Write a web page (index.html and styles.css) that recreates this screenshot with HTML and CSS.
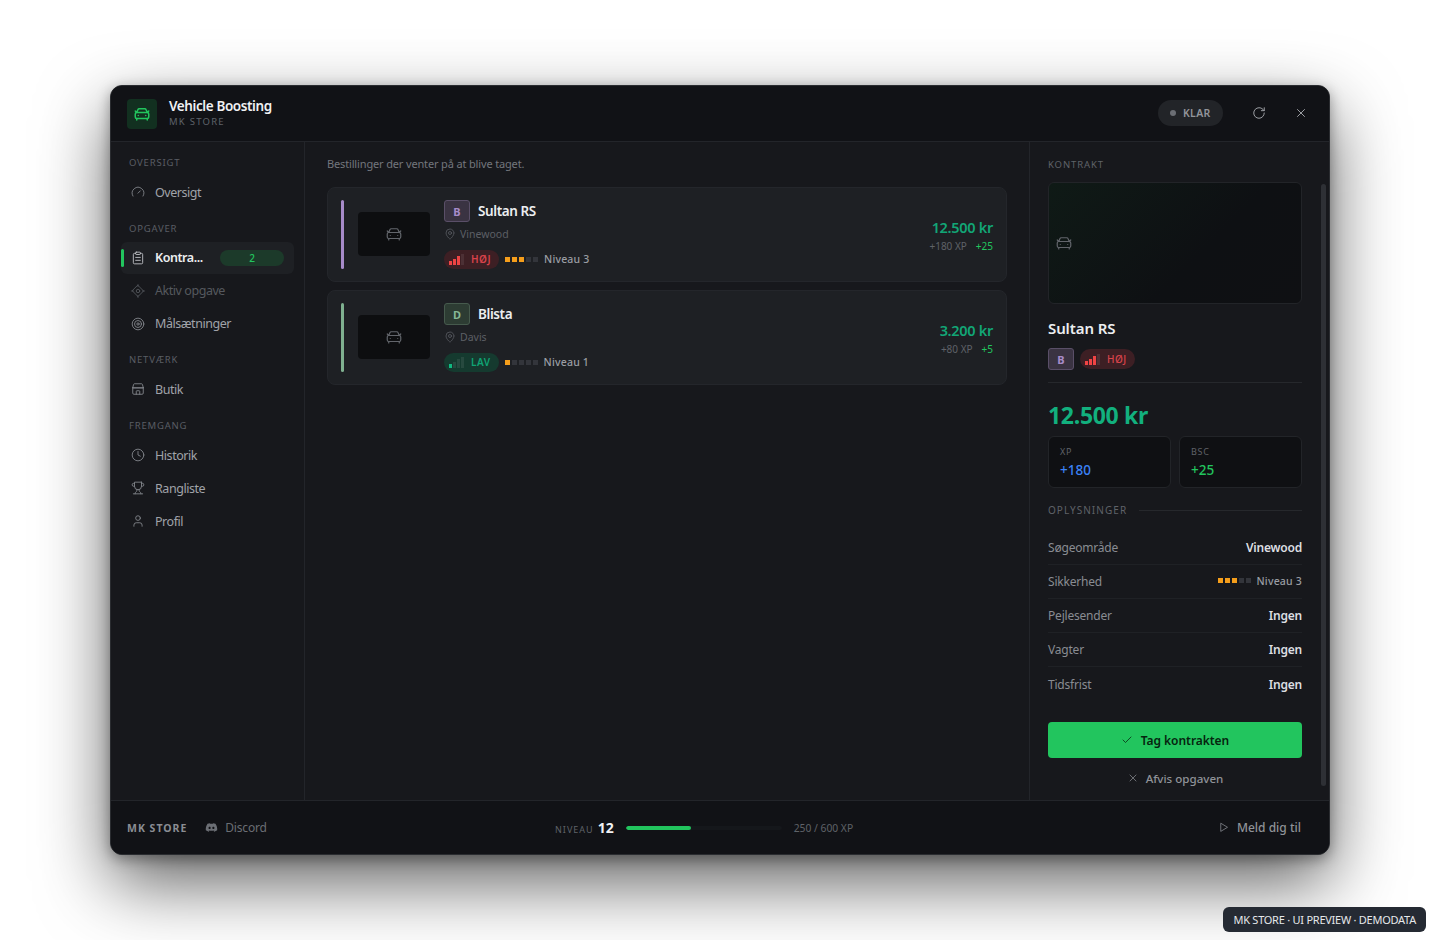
FILE: index.html
```html
<!DOCTYPE html>
<html lang="en">
<head>
  <meta charset="UTF-8" />
  <title>Vehicle Boosting</title>
  <link rel="stylesheet" href="styles.css">
</head>
<body>
  <svg class="sprite" xmlns="http://www.w3.org/2000/svg">
    <symbol id="i-car" viewBox="0 0 24 24"><path d="m21 8-2 2-1.5-3.7A2 2 0 0 0 15.65 5H8.4a2 2 0 0 0-1.9 1.26L5 10 3 8"/><path d="M7 14h.01M17 14h.01"/><rect x="3" y="10" width="18" height="8" rx="2"/><path d="M5 18v2M19 18v2"/></symbol>
    <symbol id="i-gauge" viewBox="0 0 24 24"><path d="m12 14 4-4"/><path d="M3.34 19a10 10 0 1 1 17.32 0"/></symbol>
    <symbol id="i-clip" viewBox="0 0 24 24"><rect x="8" y="2" width="8" height="4" rx="1"/><path d="M16 4h2a2 2 0 0 1 2 2v14a2 2 0 0 1-2 2H6a2 2 0 0 1-2-2V6a2 2 0 0 1 2-2h2"/><path d="M8 11h8M8 16h8"/></symbol>
    <symbol id="i-locate" viewBox="0 0 24 24"><path d="M12 2.500 21.500 12 12 21.500 2.500 12Z"/><circle cx="12" cy="12" r="3"/><path d="M12 1v3M12 20v3M1 12h3M20 12h3"/></symbol>
    <symbol id="i-target" viewBox="0 0 24 24"><circle cx="12" cy="12" r="10"/><circle cx="12" cy="12" r="6"/><circle cx="12" cy="12" r="2"/></symbol>
    <symbol id="i-store" viewBox="0 0 24 24"><path d="M3 9.500V19a2 2 0 0 0 2 2h14a2 2 0 0 0 2-2V9.500"/><path d="M3 9.500 4.500 4a1.500 1.500 0 0 1 1.400-1h12.200a1.500 1.500 0 0 1 1.400 1L21 9.500Z"/><path d="M3 10h18M9 21v-5a1 1 0 0 1 1-1h4a1 1 0 0 1 1 1v5"/></symbol>
    <symbol id="i-clock" viewBox="0 0 24 24"><circle cx="12" cy="12" r="10"/><path d="M12 6v6l4 2"/></symbol>
    <symbol id="i-trophy" viewBox="0 0 24 24"><path d="M6 9H4.500a2.500 2.500 0 0 1 0-5H6M18 9h1.500a2.500 2.500 0 0 0 0-5H18M4 22h16"/><path d="M10 14.660V17c0 .55-.47.98-.97 1.210C7.850 18.750 7 20.240 7 22M14 14.660V17c0 .55.47.98.97 1.210C16.150 18.750 17 20.240 17 22"/><path d="M18 2H6v7a6 6 0 0 0 12 0V2Z"/></symbol>
    <symbol id="i-user" viewBox="0 0 24 24"><path d="M19 21v-2a4 4 0 0 0-4-4H9a4 4 0 0 0-4 4v2"/><circle cx="12" cy="7" r="4"/></symbol>
    <symbol id="i-pin" viewBox="0 0 24 24"><path d="M20 10c0 5-5.500 10.200-7.400 11.800a1 1 0 0 1-1.200 0C9.500 20.200 4 15 4 10a8 8 0 0 1 16 0"/><circle cx="12" cy="10" r="3"/></symbol>
    <symbol id="i-refresh" viewBox="0 0 24 24"><path d="M21 12a9 9 0 1 1-9-9c2.520 0 4.930 1 6.740 2.740L21 8"/><path d="M21 3v5h-5"/></symbol>
    <symbol id="i-x" viewBox="0 0 24 24"><path d="M18 6 6 18M6 6l12 12"/></symbol>
    <symbol id="i-check" viewBox="0 0 24 24"><path d="M20 6 9 17l-5-5"/></symbol>
    <symbol id="i-play" viewBox="0 0 24 24"><path d="M6 3.500v17l14-8.500Z"/></symbol>
  </svg>

  <div class="window">
    <header class="topbar">
      <div class="brand-icon"><svg class="ic"><use href="#i-car"/></svg></div>
      <div class="brand-text">
        <div class="brand-title">Vehicle Boosting</div>
        <div class="brand-sub">MK STORE</div>
      </div>
      <div class="status"><span class="status-dot"></span>KLAR</div>
      <button class="top-btn"><svg class="ic"><use href="#i-refresh"/></svg></button>
      <button class="top-btn"><svg class="ic"><use href="#i-x"/></svg></button>
    </header>

    <div class="body">
      <nav class="sidebar">
        <div class="nav-label">OVERSIGT</div>
        <a class="nav-item"><svg class="ic"><use href="#i-gauge"/></svg>Oversigt</a>

        <div class="nav-label">OPGAVER</div>
        <a class="nav-item active"><svg class="ic"><use href="#i-clip"/></svg><span class="nav-name">Kontra...</span><span class="nav-count">2</span></a>
        <a class="nav-item disabled"><svg class="ic"><use href="#i-locate"/></svg>Aktiv opgave</a>
        <a class="nav-item"><svg class="ic"><use href="#i-target"/></svg>Målsætninger</a>

        <div class="nav-label">NETVÆRK</div>
        <a class="nav-item"><svg class="ic"><use href="#i-store"/></svg>Butik</a>

        <div class="nav-label">FREMGANG</div>
        <a class="nav-item"><svg class="ic"><use href="#i-clock"/></svg>Historik</a>
        <a class="nav-item"><svg class="ic"><use href="#i-trophy"/></svg>Rangliste</a>
        <a class="nav-item"><svg class="ic"><use href="#i-user"/></svg>Profil</a>
      </nav>

      <main class="main">
        <p class="intro">Bestillinger der venter på at blive taget.</p>

        <div class="card">
          <div class="accent accent-b"></div>
          <div class="thumb"><svg class="ic"><use href="#i-car"/></svg></div>
          <div class="card-info">
            <div class="card-head"><span class="grade grade-b">B</span><span class="card-name">Sultan RS</span></div>
            <div class="card-loc"><svg class="ic"><use href="#i-pin"/></svg>Vinewood</div>
            <div class="card-tags">
              <span class="risk risk-high"><span class="bars"><i class="on"></i><i class="on"></i><i class="on"></i><i></i></span>HØJ</span>
              <span class="sec"><i class="on"></i><i class="on"></i><i class="on"></i><i></i><i></i></span>
              <span class="sec-text">Niveau 3</span>
            </div>
          </div>
          <div class="card-pay">
            <div class="card-price">12.500 kr</div>
            <div class="card-rewards"><span class="xp">+180 XP</span><span class="bsc">+25</span></div>
          </div>
        </div>

        <div class="card">
          <div class="accent accent-d"></div>
          <div class="thumb"><svg class="ic"><use href="#i-car"/></svg></div>
          <div class="card-info">
            <div class="card-head"><span class="grade grade-d">D</span><span class="card-name">Blista</span></div>
            <div class="card-loc"><svg class="ic"><use href="#i-pin"/></svg>Davis</div>
            <div class="card-tags">
              <span class="risk risk-low"><span class="bars"><i class="on"></i><i></i><i></i><i></i></span>LAV</span>
              <span class="sec"><i class="on"></i><i></i><i></i><i></i><i></i></span>
              <span class="sec-text">Niveau 1</span>
            </div>
          </div>
          <div class="card-pay">
            <div class="card-price">3.200 kr</div>
            <div class="card-rewards"><span class="xp">+80 XP</span><span class="bsc">+5</span></div>
          </div>
        </div>
      </main>

      <aside class="detail">
        <div class="scrollbar"></div>
        <div class="detail-label">KONTRAKT</div>
        <div class="hero"><svg class="ic"><use href="#i-car"/></svg></div>
        <div class="detail-name">Sultan RS</div>
        <div class="detail-badges">
          <span class="grade grade-b">B</span>
          <span class="risk risk-high risk-sm"><span class="bars"><i class="on"></i><i class="on"></i><i class="on"></i><i></i></span>HØJ</span>
        </div>
        <div class="detail-price">12.500 kr</div>
        <div class="stats">
          <div class="stat"><div class="stat-label">XP</div><div class="stat-value blue">+180</div></div>
          <div class="stat"><div class="stat-label">BSC</div><div class="stat-value green">+25</div></div>
        </div>
        <div class="info-head"><span>OPLYSNINGER</span></div>
        <div class="info-row"><span>Søgeområde</span><b>Vinewood</b></div>
        <div class="info-row"><span>Sikkerhed</span><span class="info-sec"><span class="sec"><i class="on"></i><i class="on"></i><i class="on"></i><i></i><i></i></span><span class="sec-text">Niveau 3</span></span></div>
        <div class="info-row"><span>Pejlesender</span><b>Ingen</b></div>
        <div class="info-row"><span>Vagter</span><b>Ingen</b></div>
        <div class="info-row"><span>Tidsfrist</span><b>Ingen</b></div>
        <button class="btn-take"><svg class="ic"><use href="#i-check"/></svg>Tag kontrakten</button>
        <button class="btn-reject"><svg class="ic"><use href="#i-x"/></svg>Afvis opgaven</button>
      </aside>
    </div>

    <footer class="footer">
      <div class="foot-left">
        <span class="foot-brand">MK STORE</span>
        <span class="foot-discord">
          <svg class="discord" viewBox="0 0 24 24"><path d="M19.300 5.300A18 18 0 0 0 15 4l-.6 1.200a17 17 0 0 0-4.800 0L9 4a18 18 0 0 0-4.400 1.300C1.900 9.400 1.100 13.400 1.500 17.300A18 18 0 0 0 7 20l1.100-1.800a11 11 0 0 1-1.800-.9l.4-.3a13 13 0 0 0 10.600 0l.4.3a11 11 0 0 1-1.800.9L17 20a18 18 0 0 0 5.500-2.700c.5-4.500-.8-8.500-3.200-12ZM8.500 14.900c-1.100 0-2-1-2-2.200s.9-2.200 2-2.200 2 1 2 2.200-.9 2.200-2 2.200Zm7 0c-1.100 0-2-1-2-2.200s.9-2.200 2-2.200 2 1 2 2.200-.9 2.200-2 2.200Z"/></svg>
          Discord
        </span>
      </div>
      <div class="foot-mid">
        <span class="lvl-label">NIVEAU</span>
        <span class="lvl-num">12</span>
        <div class="xp-track"><div class="xp-fill" style="width: 41.7%"></div></div>
        <span class="xp-text">250 / 600 XP</span>
      </div>
      <div class="foot-right"><svg class="ic"><use href="#i-play"/></svg>Meld dig til</div>
    </footer>
  </div>

  <div class="watermark">MK STORE · UI PREVIEW · DEMODATA</div>
</body>
</html>
```

FILE: styles.css
```css
* {
  box-sizing: border-box;
}
body {
  margin: 0;
  height: 940px;
  overflow: hidden;
  background: #fff;
  font-family: "Noto Sans", Arial, sans-serif;
  display: flex;
  align-items: center;
  justify-content: center;
}
.sprite {
  display: none;
}
.ic {
  fill: none;
  stroke: currentColor;
  stroke-width: 2;
  stroke-linecap: round;
  stroke-linejoin: round;
  flex: none;
}
button {
  font-family: inherit;
  border: 0;
  background: none;
  cursor: pointer;
}

.window {
  width: 1220px;
  height: 770px;
  display: flex;
  flex-direction: column;
  background: #17181c;
  border: 1px solid #2a2c30;
  border-radius: 12px;
  overflow: hidden;
  box-shadow: 0 28px 70px rgba(0, 0, 0, 0.62), 0 4px 14px rgba(0, 0, 0, 0.35);
}

/* top bar */
.topbar {
  height: 56px;
  flex: none;
  display: flex;
  align-items: center;
  padding: 0 16px;
  background: #111216;
  border-bottom: 1px solid #23252a;
}
.brand-icon {
  width: 30px;
  height: 30px;
  border-radius: 4px;
  background: #123020;
  color: #22c55e;
  display: flex;
  align-items: center;
  justify-content: center;
}
.brand-icon .ic {
  width: 18px;
  height: 18px;
}
.brand-text {
  margin-left: 12px;
  flex: 1;
}
.brand-title {
  font-size: 13.5px;
  line-height: 16px;
  font-weight: 600;
  color: #f0f1f3;
  letter-spacing: -0.4px;
}
.brand-sub {
  font-size: 9.5px;
  line-height: 14px;
  margin-top: 1px;
  color: #5e6269;
  letter-spacing: 1.25px;
}
.status {
  height: 26px;
  width: 65px;
  border-radius: 13px;
  background: #222428;
  color: #92959b;
  font-size: 10.5px;
  font-weight: 600;
  letter-spacing: 0.3px;
  display: flex;
  align-items: center;
  padding-left: 12px;
  gap: 7px;
  margin-bottom: 1px;
}
.status-dot {
  width: 6px;
  height: 6px;
  border-radius: 50%;
  background: #6b6e74;
}
.top-btn {
  width: 16px;
  height: 16px;
  padding: 0;
  color: #a6a8ad;
  margin-left: 26px;
  margin-bottom: 1px;
  display: flex;
}
.status + .top-btn {
  margin-left: 28px;
}
.top-btn .ic {
  width: 14px;
  height: 14px;
  margin: 1px;
  stroke-width: 1.6;
}
.top-btn:last-child {
  margin-right: 4px;
}

.body {
  flex: 1;
  display: flex;
  min-height: 0;
}

/* sidebar */
.sidebar {
  width: 194px;
  flex: none;
  padding: 10px 10px 0;
  border-right: 1px solid #23252a;
}
.nav-label {
  font-size: 9.5px;
  line-height: 22px;
  letter-spacing: 0.8px;
  color: #5a5d64;
  padding-left: 8px;
  margin-top: 9.7px;
  margin-bottom: 2px;
}
.nav-label:first-child {
  margin-top: 0;
}
.nav-item {
  height: 32px;
  margin-bottom: 1px;
  display: flex;
  align-items: center;
  gap: 10px;
  padding: 0 10px 0 10px;
  border-radius: 6px;
  font-size: 12.5px;
  letter-spacing: -0.45px;
  color: #a0a3a9;
  position: relative;
}
.nav-item .ic {
  width: 14px;
  height: 14px;
  stroke-width: 1.5;
  color: #85888e;
}
.nav-item.active {
  background: #1e2024;
  color: #eceef0;
  font-weight: 600;
}
.nav-item.active::before {
  content: "";
  position: absolute;
  left: 0;
  top: 7px;
  width: 3px;
  height: 18px;
  border-radius: 2px;
  background: #22c55e;
}
.nav-item.active .ic {
  color: #c5c7cb;
}
.nav-item.disabled,
.nav-item.disabled .ic {
  color: #55585e;
}
.nav-name {
  flex: 1;
}
.nav-count {
  width: 64px;
  height: 16px;
  border-radius: 8px;
  background: #1c3a2a;
  color: #22c55e;
  font-size: 10px;
  font-weight: 500;
  line-height: 16px;
  text-align: center;
  letter-spacing: 0;
}

/* order list */
.main {
  flex: 1;
  min-width: 0;
  padding: 12px 22px;
  border-right: 1px solid #23252a;
}
.intro {
  margin: 0 0 13px;
  font-size: 11px;
  line-height: 20px;
  letter-spacing: -0.15px;
  color: #73767c;
}
.card {
  height: 95px;
  margin-bottom: 8px;
  display: flex;
  align-items: center;
  padding: 0 13px;
  background: #1e2024;
  border: 1px solid #24262b;
  border-radius: 8px;
}
.accent {
  width: 3px;
  height: 69px;
  border-radius: 2px;
  flex: none;
}
.accent-b {
  background: #a78bc9;
}
.accent-d {
  background: #7fb08f;
}
.thumb {
  width: 72px;
  height: 44px;
  margin-left: 14px;
  margin-bottom: 1px;
  border-radius: 4px;
  background: #0d0e10;
  color: #62656b;
  display: flex;
  align-items: center;
  justify-content: center;
  flex: none;
}
.thumb .ic {
  width: 18px;
  height: 18px;
  stroke-width: 1.6;
}
.card-info {
  margin-left: 14px;
  flex: 1;
}
.card-head {
  display: flex;
  align-items: center;
  gap: 8px;
  height: 22px;
}
.grade {
  width: 26px;
  height: 22px;
  border-radius: 3px;
  font-size: 11px;
  font-weight: 700;
  display: flex;
  align-items: center;
  justify-content: center;
  flex: none;
}
.grade-b {
  background: #3a3342;
  border: 1px solid #5a4f68;
  color: #a78bc9;
}
.grade-d {
  background: #2d3c33;
  border: 1px solid #465a4d;
  color: #86b896;
}
.card-name {
  font-size: 13.5px;
  font-weight: 600;
  letter-spacing: -0.4px;
  color: #eceef0;
}
.card-loc {
  display: flex;
  align-items: center;
  gap: 4px;
  height: 24px;
  font-size: 10.5px;
  color: #5c5f65;
}
.card-loc .ic {
  width: 12px;
  height: 12px;
  stroke-width: 1.5;
}
.card-tags {
  display: flex;
  align-items: center;
  margin-top: 3px;
  height: 20px;
}
.risk {
  height: 19px;
  padding: 0 8px 0 5px;
  border-radius: 10px;
  display: inline-flex;
  align-items: center;
  gap: 7px;
  font-size: 10px;
  font-weight: 600;
  letter-spacing: 0.5px;
}
.risk-sm {
  font-weight: 500;
  height: 20px;
}
.risk-high {
  background: #3d1f24;
  color: #d9434b;
}
.risk-low {
  background: #153a2f;
  color: #10a374;
}
.bars {
  display: inline-flex;
  align-items: flex-end;
  gap: 1px;
  height: 11px;
}
.bars i {
  width: 3px;
  background: rgba(255, 255, 255, 0.08);
}
.bars i:nth-child(1) { height: 4px; }
.bars i:nth-child(2) { height: 6px; }
.bars i:nth-child(3) { height: 9px; }
.bars i:nth-child(4) { height: 11px; }
.risk-high .bars i.on {
  background: #ef4444;
}
.risk-low .bars i.on {
  background: #10b981;
}
.sec {
  display: inline-flex;
  gap: 2px;
  margin-left: 6px;
}
.sec i {
  width: 5px;
  height: 5px;
  background: #33353b;
}
.sec i.on {
  background: #f59e1b;
}
.sec-text {
  margin-left: 6px;
  font-size: 10.5px;
  font-weight: 500;
  letter-spacing: 0.2px;
  color: #9a9da3;
}
.card-pay {
  text-align: right;
}
.card-price {
  font-size: 14.5px;
  line-height: 22px;
  font-weight: 600;
  letter-spacing: -0.3px;
  color: #12a676;
}
.card-rewards {
  font-size: 10px;
  line-height: 16px;
}
.xp {
  color: #5f6268;
}
.bsc {
  color: #22c55e;
  margin-left: 9px;
}

/* contract panel */
.detail {
  width: 299px;
  flex: none;
  padding: 13px 27px 0 18px;
  position: relative;
  overflow: hidden;
}
.scrollbar {
  position: absolute;
  top: 42px;
  right: 3px;
  width: 5px;
  height: 602px;
  border-radius: 3px;
  background: #2e3035;
}
.detail-label {
  font-size: 9.5px;
  line-height: 20px;
  letter-spacing: 0.9px;
  color: #5f6268;
  margin-bottom: 7px;
}
.hero {
  height: 122px;
  border: 1px solid #222428;
  border-radius: 6px;
  background: linear-gradient(135deg, #0f1a16, #0e1013 60%, #0f1013);
  color: #62656b;
  display: flex;
  align-items: center;
  padding-left: 6px;
}
.hero .ic {
  width: 18px;
  height: 18px;
  stroke-width: 1.6;
}
.detail-name {
  font-size: 15px;
  line-height: 22px;
  font-weight: 600;
  letter-spacing: -0.1px;
  color: #eceef0;
  margin-top: 13px;
}
.detail-badges {
  display: flex;
  align-items: center;
  gap: 6px;
  margin-top: 9px;
  padding-bottom: 12px;
  border-bottom: 1px solid #26282c;
}
.detail-price {
  font-size: 23px;
  line-height: 30px;
  font-weight: 700;
  letter-spacing: -0.3px;
  color: #12b07e;
  margin-top: 17px;
}
.stats {
  display: flex;
  gap: 8px;
  margin-top: 6px;
}
.stat {
  flex: 1;
  height: 52px;
  border: 1px solid #222428;
  border-radius: 6px;
  background: #0f1013;
  padding: 9px 11px;
}
.stat-label {
  font-size: 9px;
  line-height: 12px;
  letter-spacing: 0.7px;
  color: #5f6268;
}
.stat-value {
  font-size: 13.5px;
  line-height: 20px;
  font-weight: 500;
  margin-top: 2px;
}
.blue {
  color: #3b82f6;
}
.green {
  color: #22c55e;
}
.info-head {
  display: flex;
  align-items: center;
  gap: 12px;
  margin-top: 12px;
  margin-bottom: 11px;
  font-size: 10px;
  line-height: 20px;
  letter-spacing: 1.05px;
  color: #5f6268;
}
.info-head::after {
  content: "";
  flex: 1;
  height: 1px;
  background: #26282c;
}
.info-row {
  height: 34px;
  display: flex;
  align-items: center;
  justify-content: space-between;
  border-bottom: 1px solid #1f2125;
  font-size: 12px;
  letter-spacing: -0.2px;
  color: #898c92;
}
.info-row:last-of-type {
  border-bottom: 0;
}
.info-row b {
  font-weight: 600;
  color: #dcdee1;
}
.info-sec {
  display: flex;
  align-items: center;
  margin-top: -2px;
}
.info-sec .sec-text {
  letter-spacing: 0.2px;
}
.btn-take {
  width: 100%;
  height: 36px;
  margin-top: 21px;
  border-radius: 4px;
  background: #22c55e;
  color: #06240f;
  font-size: 12px;
  font-weight: 600;
  letter-spacing: -0.05px;
  display: flex;
  align-items: center;
  justify-content: center;
  gap: 8px;
  padding: 0;
}
.btn-take .ic {
  width: 12px;
  height: 12px;
  stroke-width: 1.5;
}
.btn-reject {
  width: 100%;
  height: 20px;
  margin-top: 10px;
  color: #8f9298;
  font-size: 11.6px;
  font-weight: 500;
  display: flex;
  align-items: center;
  justify-content: center;
  gap: 7px;
  padding: 0;
}
.btn-reject .ic {
  width: 12px;
  height: 12px;
  stroke-width: 1.4;
}

/* footer */
.footer {
  height: 54px;
  flex: none;
  display: flex;
  align-items: center;
  padding: 0 28px 0 16px;
  background: #111216;
  border-top: 1px solid #23252a;
}
.foot-left {
  width: 428px;
  display: flex;
  align-items: center;
  gap: 18px;
}
.foot-brand {
  font-size: 10.5px;
  font-weight: 700;
  letter-spacing: 1px;
  color: #8a8d93;
}
.foot-discord {
  display: flex;
  align-items: center;
  gap: 7px;
  font-size: 12px;
  letter-spacing: -0.2px;
  color: #6b6e74;
}
.discord {
  width: 13px;
  height: 13px;
  fill: #6b6e74;
}
.foot-mid {
  flex: 1;
  display: flex;
  align-items: center;
}
.lvl-label {
  font-size: 9px;
  letter-spacing: 1px;
  color: #5f6268;
  margin-top: 3px;
}
.lvl-num {
  font-size: 14px;
  font-weight: 700;
  color: #f0f1f3;
  margin-left: 4px;
}
.xp-track {
  width: 156px;
  height: 4px;
  border-radius: 2px;
  background: #15171b;
  margin-left: 12px;
  overflow: hidden;
}
.xp-fill {
  height: 100%;
  border-radius: 2px;
  background: #22c55e;
}
.xp-text {
  margin-left: 12px;
  font-size: 10.3px;
  color: #5f6268;
}
.foot-right {
  display: flex;
  align-items: center;
  gap: 8px;
  font-size: 12px;
  font-weight: 500;
  color: #8f9298;
}
.foot-right .ic {
  width: 11px;
  height: 11px;
  stroke-width: 1.6;
}

.watermark {
  position: fixed;
  right: 14px;
  bottom: 8px;
  height: 25px;
  line-height: 25px;
  padding: 0 10px;
  border-radius: 6px;
  background: #252a33;
  color: #e6e8eb;
  font-size: 11px;
  letter-spacing: -0.25px;
}
```
